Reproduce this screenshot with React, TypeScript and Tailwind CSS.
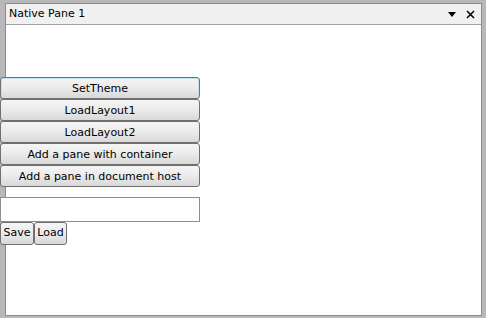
import React from 'react';

const btn =
  'h-[22px] w-[200px] rounded-[3px] border border-[#707070] bg-gradient-to-b from-[#f5f5f5] via-[#ebebeb] to-[#d8d8d8] text-[11px] text-black leading-none';

const App = () => {
  return (
    <div className="relative w-[486px] h-[318px] bg-[#b8b8b8] font-['DejaVu_Sans',sans-serif] overflow-hidden">
      {/* Pane */}
      <div className="absolute left-[5px] top-[3px] w-[477px] h-[313px] border border-[#8c8c8c] bg-white flex flex-col">
        <div className="h-[21px] flex items-center justify-between bg-[#f0f0f0] border-b border-[#a0a0a0] pl-[3px] pr-[6px]">
          <span className="text-[11px] text-black">Native Pane 1</span>
          <div className="flex items-center gap-[10px]">
            <svg width="8" height="5" viewBox="0 0 8 5">
              <path d="M0 0 H8 L4 5 Z" fill="#000" />
            </svg>
            <svg width="9" height="9" viewBox="0 0 9 9">
              <path d="M1 1 L8 8 M8 1 L1 8" stroke="#000" strokeWidth="1.5" />
            </svg>
          </div>
        </div>
      </div>

      {/* Controls laid over the pane */}
      <div className="absolute left-0 top-[77px] flex flex-col">
        <button className={btn + ' border-[#3c94b8] shadow-[inset_0_0_0_1px_#bfe3f0]'}>SetTheme</button>
        <button className={btn}>LoadLayout1</button>
        <button className={btn}>LoadLayout2</button>
        <button className={btn}>Add a pane with container</button>
        <button className={btn}>Add a pane in document host</button>
        <input className="mt-[10px] h-[25px] w-[200px] border border-[#8a8f96] bg-white outline-none" />
        <div className="flex">
          <button className="h-[23px] w-[34px] rounded-[3px] border border-[#707070] bg-gradient-to-b from-[#f5f5f5] via-[#ebebeb] to-[#d8d8d8] text-[11px] text-black">Save</button>
          <button className="h-[23px] w-[33px] rounded-[3px] border border-[#707070] bg-gradient-to-b from-[#f5f5f5] via-[#ebebeb] to-[#d8d8d8] text-[11px] text-black">Load</button>
        </div>
      </div>
    </div>
  );
};

export default App;
